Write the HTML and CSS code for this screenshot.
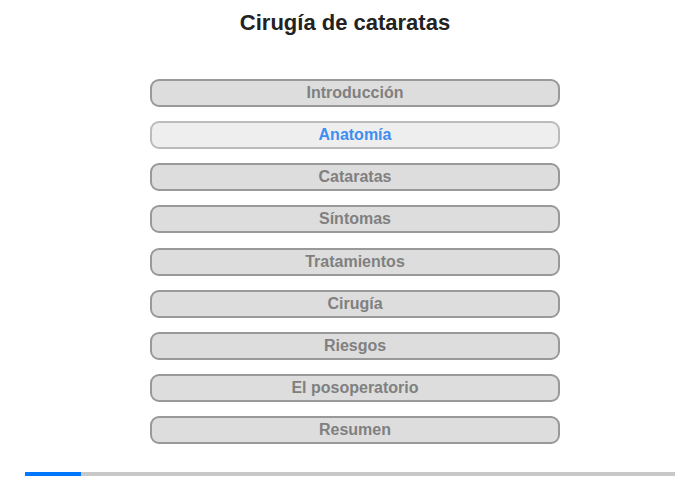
FILE: index.html
```html
<!DOCTYPE html>
<html lang="es">
<head>
  <meta charset="UTF-8" />
  <title>Cirugía de cataratas</title>
  <link rel="stylesheet" href="styles.css">
</head>
<body>
  <h1 class="title">Cirugía de cataratas</h1>

  <nav class="menu">
    <button class="menu-item">Introducción</button>
    <button class="menu-item active">Anatomía</button>
    <button class="menu-item">Cataratas</button>
    <button class="menu-item">Síntomas</button>
    <button class="menu-item">Tratamientos</button>
    <button class="menu-item">Cirugía</button>
    <button class="menu-item">Riesgos</button>
    <button class="menu-item">El posoperatorio</button>
    <button class="menu-item">Resumen</button>
  </nav>

  <div class="progress">
    <div class="progress-fill" style="width: 56px;"></div>
  </div>
</body>
</html>
```

FILE: styles.css
```css
body {
  margin: 0;
  font-family: "Liberation Sans", Arial, sans-serif;
  background: #fff;
  color: #222;
  height: 480px;
  display: flex;
  flex-direction: column;
}

.title {
  margin: 10px 10px 0 0;
  font-size: 22px;
  line-height: 25px;
  text-align: center;
  color: #222;
}

.menu {
  display: flex;
  flex-direction: column;
  align-items: center;
  gap: 14.125px;
  margin-top: 44px;
  padding-left: 10px;
}

.menu-item {
  width: 410px;
  height: 28px;
  padding: 0;
  background: #ddd;
  border: 2px solid #999;
  border-radius: 9px;
  font-family: inherit;
  font-size: 16px;
  font-weight: bold;
  color: #808080;
  cursor: pointer;
}

.menu-item.active {
  background: #eee;
  border-color: #bbb;
  color: #3d8ef0;
}

.progress {
  margin: auto 25px 4px;
  height: 4px;
  background: #c8c8c8;
}

.progress-fill {
  height: 100%;
  background: #0077ff;
}
```
